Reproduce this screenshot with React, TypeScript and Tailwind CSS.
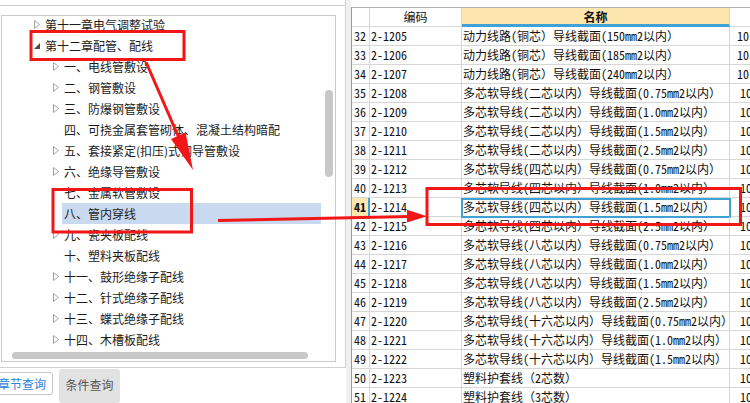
import React from "react";

type TreeNode = {
  label: string;
  level: 1 | 2;
  arrow: "closed" | "open" | "none";
  selected?: boolean;
};

const nodes: TreeNode[] = [
  { label: "第十一章电气调整试验", level: 1, arrow: "closed" },
  { label: "第十二章配管、配线", level: 1, arrow: "open" },
  { label: "一、电线管敷设", level: 2, arrow: "closed" },
  { label: "二、钢管敷设", level: 2, arrow: "closed" },
  { label: "三、防爆钢管敷设", level: 2, arrow: "closed" },
  { label: "四、可挠金属套管砌体、混凝土结构暗配", level: 2, arrow: "none" },
  { label: "五、套接紧定(扣压)式钢导管敷设", level: 2, arrow: "closed" },
  { label: "六、绝缘导管敷设", level: 2, arrow: "closed" },
  { label: "七、金属软管敷设", level: 2, arrow: "none" },
  { label: "八、管内穿线", level: 2, arrow: "none", selected: true },
  { label: "九、瓷夹板配线", level: 2, arrow: "closed" },
  { label: "十、塑料夹板配线", level: 2, arrow: "none" },
  { label: "十一、鼓形绝缘子配线", level: 2, arrow: "closed" },
  { label: "十二、针式绝缘子配线", level: 2, arrow: "closed" },
  { label: "十三、蝶式绝缘子配线", level: 2, arrow: "closed" },
  { label: "十四、木槽板配线", level: 2, arrow: "closed" },
];

const rows: [number, string, string][] = [
  [32, "2-1205", "动力线路(铜芯）导线截面(150mm2以内）"],
  [33, "2-1206", "动力线路(铜芯）导线截面(185mm2以内）"],
  [34, "2-1207", "动力线路(铜芯）导线截面(240mm2以内）"],
  [35, "2-1208", "多芯软导线(二芯以内）导线截面(0.75mm2以内）"],
  [36, "2-1209", "多芯软导线(二芯以内）导线截面(1.0mm2以内）"],
  [37, "2-1210", "多芯软导线(二芯以内）导线截面(1.5mm2以内）"],
  [38, "2-1211", "多芯软导线(二芯以内）导线截面(2.5mm2以内）"],
  [39, "2-1212", "多芯软导线(四芯以内）导线截面(0.75mm2以内）"],
  [40, "2-1213", "多芯软导线(四芯以内）导线截面(1.0mm2以内）"],
  [41, "2-1214", "多芯软导线(四芯以内）导线截面(1.5mm2以内）"],
  [42, "2-1215", "多芯软导线(四芯以内）导线截面(2.5mm2以内）"],
  [43, "2-1216", "多芯软导线(八芯以内）导线截面(0.75mm2以内）"],
  [44, "2-1217", "多芯软导线(八芯以内）导线截面(1.0mm2以内）"],
  [45, "2-1218", "多芯软导线(八芯以内）导线截面(1.5mm2以内）"],
  [46, "2-1219", "多芯软导线(八芯以内）导线截面(2.5mm2以内）"],
  [47, "2-1220", "多芯软导线(十六芯以内）导线截面(0.75mm2以内）"],
  [48, "2-1221", "多芯软导线(十六芯以内）导线截面(1.0mm2以内）"],
  [49, "2-1222", "多芯软导线(十六芯以内）导线截面(1.5mm2以内）"],
  [50, "2-1223", "塑料护套线（2芯数）"],
  [51, "2-1224", "塑料护套线（3芯数）"],
];

function ClosedArrow() {
  return (
    <svg width="6" height="9" viewBox="0 0 6 9">
      <path d="M0.5 0.5 L5.5 4.5 L0.5 8.5 Z" fill="none" stroke="#a3a3a3" strokeWidth="1" />
    </svg>
  );
}

function OpenArrow() {
  return (
    <svg width="6" height="6" viewBox="0 0 6 6">
      <path d="M6 0 L6 6 L0 6 Z" fill="#4a4a4a" />
    </svg>
  );
}

function Tree() {
  return (
    <div className="relative w-[335px] h-[347px] border border-[#c9c9c9] overflow-hidden bg-white">
      <div className="-mt-[2px] flex flex-col">
        {nodes.map((n, i) => (
          <div
            key={i}
            className={
              "h-[21px] w-[319px] flex items-center " +
              (n.level === 1 ? "pl-[29px]" : "pl-[48px]")
            }
          >
            <div className="w-[14px] h-full flex items-center pl-[3px]">
              {n.arrow === "closed" && <ClosedArrow />}
              {n.arrow === "open" && <OpenArrow />}
            </div>
            <div
              className={
                "h-full flex-1 flex items-center whitespace-nowrap text-[12px] text-[#1c1c1c] " +
                (n.selected ? "bg-[#c9d9ef] -ml-[2px] pl-[2px]" : "")
              }
            >
              {n.label}
            </div>
          </div>
        ))}
      </div>
      <div className="absolute left-[323px] top-[74px] w-[8px] h-[87px] rounded-full bg-[#c8c8c8]" />
      <div className="absolute left-[10px] top-[336px] w-[296px] h-[7px] rounded-full bg-[#c8c8c8]" />
    </div>
  );
}

function LeftPanel() {
  return (
    <div className="w-[346px] shrink-0 flex flex-col font-['Noto_Sans_CJK_SC',sans-serif]">
      <div className="h-[371px] border-r border-b border-[#d0d0d0] flex flex-col">
        <div className="h-[5px] shrink-0" />
        <div className="flex-1 border-t border-[#d0d0d0] pt-[9px] pl-[1px]">
          <Tree />
        </div>
      </div>
      <div className="flex items-start gap-[6px] -ml-[9px]">
        <div className="mt-[4px] h-[23px] px-[6px] flex items-center border border-[#c6c6c6] rounded-[3px] bg-white text-[12px] text-[#2f7fd6] whitespace-nowrap">
          章节查询
        </div>
        <div className="mt-[1px] h-[34px] w-[61px] pb-[3px] flex items-center justify-center rounded-[3px] bg-[#e2e2e2] text-[12px] text-[#555555] whitespace-nowrap">
          条件查询
        </div>
      </div>
    </div>
  );
}

function Table() {
  return (
    <div className="flex-1 min-w-0 pt-[7px] overflow-hidden font-['Noto_Sans_Mono_CJK_SC','Noto_Sans_CJK_SC',monospace] text-[12px] text-[#111]">
      <div className="w-[460px] border-t border-l border-t-[#b0b0b0] border-l-[#9a9a9a]">
        <div className="flex h-[19px]">
          <div className="w-[18px] shrink-0 border-r border-b border-[#d6d6d6] bg-white" />
          <div className="w-[92px] shrink-0 border-r border-b border-[#d6d6d6] bg-white flex items-center justify-center">
            编码
          </div>
          <div className="w-[268px] shrink-0 border-r border-r-[#d6d6d6] border-b-[3px] border-b-[#3fa2d6] bg-[#fce6ad] flex items-center justify-center font-bold pt-[2px]">
            名称
          </div>
          <div className="w-[70px] shrink-0 border-b border-[#d6d6d6] bg-white" />
        </div>
        {rows.map(([n, code, name]) => {
          const sel = n === 41;
          return (
            <div key={n} className="flex h-[19px]">
              <div
                className={
                  "w-[18px] shrink-0 border-b border-[#d6d6d6] flex items-center pl-[2px] whitespace-nowrap " +
                  (sel
                    ? "bg-[#fde8b0] font-bold border-r-2 border-r-[#3fa2d6]"
                    : "border-r border-r-[#d6d6d6]")
                }
              >
                {n}
              </div>
              <div className="w-[92px] shrink-0 border-r border-b border-[#d6d6d6] flex items-center pl-[1px] whitespace-nowrap">
                {code}
              </div>
              <div className="relative w-[268px] shrink-0 border-r border-b border-[#d6d6d6] flex items-center pl-[1px] whitespace-nowrap overflow-visible">
                {name}
                {sel && (
                  <div className="absolute -left-px top-0 -right-[2px] -bottom-[2px] border-2 border-[#3fa2d6]" />
                )}
              </div>
              <div
                className={
                  "w-[70px] shrink-0 border-b border-[#d6d6d6] flex items-center whitespace-nowrap " +
                  (n <= 34 ? "pl-[7px]" : "pl-[10px]")
                }
              >
                10
              </div>
            </div>
          );
        })}
      </div>
    </div>
  );
}

function Annotations() {
  const red = "#f21616";
  return (
    <svg
      className="absolute left-0 top-0 pointer-events-none"
      width="750"
      height="403"
      viewBox="0 0 750 403"
    >
      <g stroke={red} strokeWidth="3" fill="none">
        <rect x="31" y="31.5" width="153" height="28" />
        <rect x="53" y="189.5" width="138.5" height="42.5" />
        <rect x="427" y="188.5" width="313.5" height="36" />
        <line x1="146" y1="62" x2="179" y2="138" />
        <line x1="218" y1="220.6" x2="410" y2="216.6" />
      </g>
      <polygon points="193,170 171,139 185.5,132.6" fill={red} />
      <polygon points="427,216.3 407,209.8 407,222.6" fill={red} />
    </svg>
  );
}

export default function App() {
  return (
    <div className="relative w-[750px] h-[403px] overflow-hidden bg-white flex">
      <LeftPanel />
      <div className="w-[5px] shrink-0 bg-[#f0f0f0]" />
      <Table />
      <Annotations />
    </div>
  );
}
